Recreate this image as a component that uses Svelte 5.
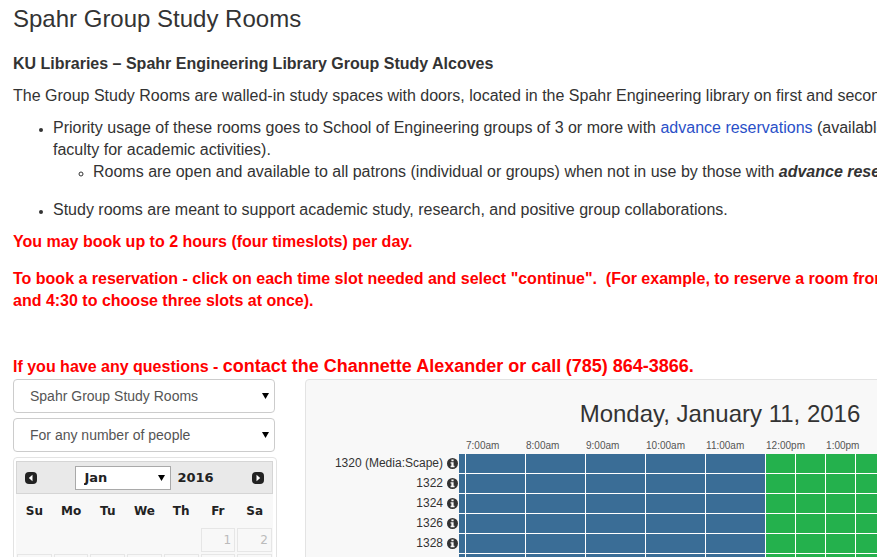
<script>
  const weekdays = ['Su', 'Mo', 'Tu', 'We', 'Th', 'Fr', 'Sa'];
  const weeks = [
    ['', '', '', '', '', 1, 2],
    [3, 4, 5, 6, 7, 8, 9],
  ];
  const hours = ['7:00am', '8:00am', '9:00am', '10:00am', '11:00am', '12:00pm', '1:00pm', '2:00pm', '3:00pm', '4:00pm', '5:00pm'];
  const closedHours = 5;
  const openSlots = Array.from({ length: (hours.length - closedHours) * 2 }, (_, i) => {
    const hour = 12 + Math.floor(i / 2);
    return `${hour > 12 ? hour - 12 : hour}:${i % 2 ? '30' : '00'}pm`;
  });
  const rooms = ['1320 (Media:Scape)', '1322', '1324', '1326', '1328', '1330'];
</script>

{#snippet caret()}
  <svg class="caret" viewBox="0 0 7 6" width="7" height="6" aria-hidden="true"><path d="M0 0h7L3.5 6z" /></svg>
{/snippet}

<main>
  <h1>Spahr Group Study Rooms</h1>
  <h2>KU Libraries – Spahr Engineering Library Group Study Alcoves</h2>
  <p>The Group Study Rooms are walled-in study spaces with doors, located in the Spahr Engineering library on first and second</p>
  <ul class="rules">
    <li>
      Priority usage of these rooms goes to School of Engineering groups of 3 or more with <a href="#reservations">advance reservations</a> (available<br />
      faculty for academic activities).
      <ul>
        <li>Rooms are open and available to all patrons (individual or groups) when not in use by those with <strong><em>advance reservations</em></strong></li>
      </ul>
    </li>
    <li>Study rooms are meant to support academic study, research, and positive group collaborations.</li>
  </ul>
  <p class="notice">You may book up to 2 hours (four timeslots) per day.</p>
  <p class="notice booking">
    To book a reservation - click on each time slot needed and select "continue".&nbsp; (For example, to reserve a room from<br />
    and 4:30 to choose three slots at once).
  </p>
  <p class="notice contact">If you have any questions - <span>contact the Channette Alexander or call</span> <span>(785) 864-3866.</span></p>

  <div class="booking-area">
    <aside>
      <div class="picker">
        <select aria-label="Location"><option>Spahr Group Study Rooms</option></select>
        {@render caret()}
      </div>
      <div class="picker">
        <select aria-label="Group size"><option>For any number of people</option></select>
        {@render caret()}
      </div>
      <div class="calendar">
        <header>
          <button aria-label="Previous month">
            <svg viewBox="0 0 12 12" width="12" height="12"><rect width="12" height="12" rx="4" fill="#222" /><path d="M7.5 2.8v6.4L3.8 6z" fill="#fff" /></svg>
          </button>
          <div class="month">
            <div class="picker small">
              <select aria-label="Month"><option>Jan</option></select>
              {@render caret()}
            </div>
            <span>2016</span>
          </div>
          <button aria-label="Next month">
            <svg viewBox="0 0 12 12" width="12" height="12"><rect width="12" height="12" rx="4" fill="#222" /><path d="M4.5 2.8v6.4L8.2 6z" fill="#fff" /></svg>
          </button>
        </header>
        <table>
          <thead>
            <tr>{#each weekdays as day}<th scope="col">{day}</th>{/each}</tr>
          </thead>
          <tbody>
            {#each weeks as week}
              <tr>{#each week as day}<td>{#if day}<span>{day}</span>{/if}</td>{/each}</tr>
            {/each}
          </tbody>
        </table>
      </div>
    </aside>

    <section class="schedule">
      <h3>Monday, January 11, 2016</h3>
      <table>
        <colgroup>
          <col class="room-col" />
          <col class="edge-col" />
          {#each hours as _}<col class="slot-col" /><col class="slot-col" />{/each}
        </colgroup>
        <thead>
          <tr>
            <td></td>
            <td></td>
            {#each hours as hour}<th scope="col" colspan="2">{hour}</th>{/each}
          </tr>
        </thead>
        <tbody>
          {#each rooms as room}
            <tr>
              <th scope="row">
                <div class="room">
                  {room}
                  <svg viewBox="0 0 12 12" width="11" height="11" aria-hidden="true">
                    <circle cx="6" cy="6" r="6" fill="#333" />
                    <path d="M4.8 1.5h2.4v2H4.8zM3.900 4.500h3.300v4h1V10H3.900V8.500h.9V6h-.9z" fill="#f8f8f8" />
                  </svg>
                </div>
              </th>
              <td class="closed"></td>
              {#each { length: closedHours } as _}<td class="closed" colspan="2"></td>{/each}
              {#each openSlots as slot}<td class="open"><button aria-label="{room}, {slot}"></button></td>{/each}
            </tr>
          {/each}
        </tbody>
      </table>
    </section>
  </div>
</main>

<style>
  :global(body) {
    margin: 0;
    overflow: hidden;
    background: #fff;
  }
  main {
    box-sizing: border-box;
    height: 100vh;
    overflow: hidden;
    padding: 6px 0 0 13px;
    color: #333;
    font: 16px/22px 'Liberation Sans', Arial, sans-serif;
    white-space: nowrap;
  }
  h1, h2, h3, p, ul {
    margin: 0;
  }
  h1 {
    margin-bottom: 21px;
    font-size: 24px;
    font-weight: 400;
    line-height: 26px;
  }
  h2 {
    margin-bottom: 10px;
    font-size: 16px;
    line-height: 22px;
  }
  ul {
    padding-left: 40px;
  }
  li::marker {
    font-size: 12px;
  }
  .rules {
    margin: 10px 0;
  }
  .rules > li + li {
    margin-top: 16px;
  }
  a {
    color: #2a50c8;
    text-decoration: none;
  }
  .notice {
    color: #f00;
    font-weight: 700;
  }
  .booking {
    margin-top: 15px;
  }
  .contact {
    margin-top: 43px;
  }
  .contact span {
    font-size: 18px;
  }
  .booking-area {
    display: flex;
    align-items: flex-start;
    gap: 28px;
    margin-top: 1px;
  }
  aside {
    flex: 0 0 264px;
  }
  .picker {
    position: relative;
    width: 262px;
    margin-bottom: 5px;
  }
  select {
    appearance: none;
    box-sizing: border-box;
    display: block;
    width: 100%;
    height: 34px;
    padding: 0 16px;
    border: 1px solid #ccc;
    border-radius: 4px;
    background: #fff;
    color: #555;
    font: 14px 'Liberation Sans', Arial, sans-serif;
  }
  .caret {
    position: absolute;
    top: 50%;
    right: 6px;
    transform: translateY(-50%);
    fill: #000;
    pointer-events: none;
  }
  .calendar {
    box-sizing: border-box;
    height: 260px;
    padding: 3px 3px 3px 2px;
    border: 1px solid #e3e3e3;
    border-radius: 4px;
    color: #222;
    font: 13px 'DejaVu Sans', Verdana, sans-serif;
  }
  .calendar header {
    display: flex;
    align-items: center;
    justify-content: space-between;
    box-sizing: border-box;
    height: 33px;
    padding: 0 8px;
    border: 1px solid #d5d5d5;
    background: #e9e9e9;
    font-weight: 700;
  }
  button {
    display: block;
    padding: 0;
    border: 0;
    background: none;
  }
  .calendar button svg {
    display: block;
  }
  .month {
    display: flex;
    align-items: center;
    gap: 6px;
  }
  .picker.small {
    width: 96px;
    margin: 0;
  }
  .small select {
    height: 24px;
    padding: 0 8px;
    border-color: #a9a9a9;
    border-radius: 0;
    color: #222;
    font: 700 13px 'DejaVu Sans', Verdana, sans-serif;
  }
  table {
    border-collapse: collapse;
    table-layout: fixed;
  }
  td, th {
    padding: 0;
  }
  .calendar table {
    width: 100%;
    background: #f8f8f8;
    font-size: 12px;
  }
  .calendar th {
    height: 33px;
  }
  .calendar td {
    height: 26px;
    padding: 0 1px;
  }
  .calendar td span {
    display: block;
    box-sizing: border-box;
    height: 24px;
    padding: 0 3px;
    border: 1px solid #e6e6e6;
    color: #bbb;
    line-height: 22px;
    text-align: right;
  }
  .schedule {
    box-sizing: border-box;
    flex: 1 0 830px;
    height: 260px;
    border: 1px solid #e3e3e3;
    border-radius: 4px;
    background: #f8f8f8;
    overflow: hidden;
  }
  .schedule h3 {
    margin-top: 21px;
    font-size: 24px;
    font-weight: 400;
    line-height: 26px;
    text-align: center;
  }
  .schedule table {
    width: 820px;
    margin-top: 11px;
  }
  .room-col {
    width: 153px;
  }
  .edge-col {
    width: 7px;
  }
  .slot-col {
    width: 30px;
  }
  .schedule thead th {
    height: 16px;
    color: #555;
    font-size: 10px;
    font-weight: 400;
    line-height: 16px;
    text-align: left;
  }
  .schedule tbody th {
    height: 20px;
    font-size: 12px;
    font-weight: 400;
    line-height: 18px;
  }
  .room {
    display: flex;
    align-items: center;
    justify-content: flex-end;
    gap: 4px;
    padding: 0 1px 2px 0;
  }
  .closed, .open {
    box-shadow: inset -1px -1px #fff;
  }
  .closed {
    background: #3a6d96;
  }
  .open {
    background: #24b14d;
  }
  .open button {
    width: 29px;
    height: 19px;
    cursor: pointer;
  }
</style>
